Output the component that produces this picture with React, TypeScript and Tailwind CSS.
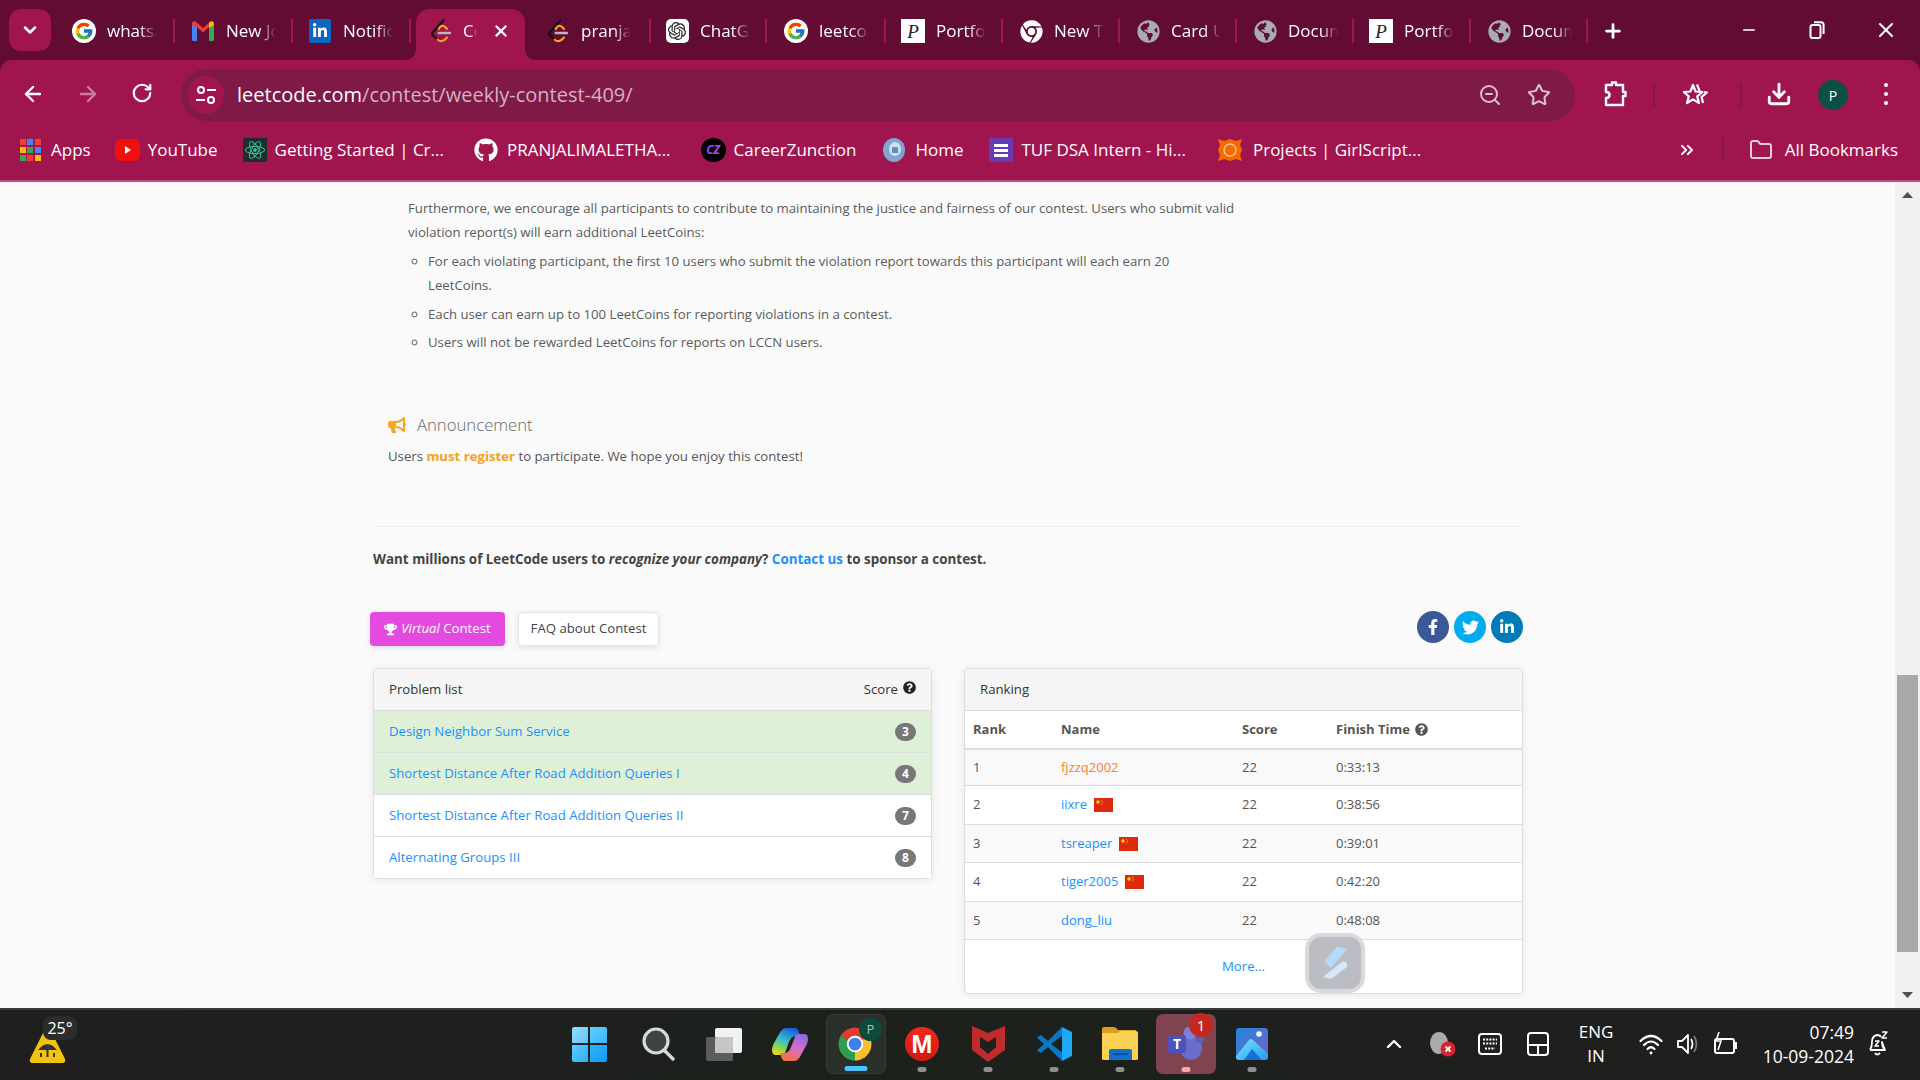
import React from 'react';
import {
  ArrowLeft, ArrowRight, RotateCw, ZoomOut, Star, Download, ChevronDown, Plus, X, Minus,
  ChevronsRight, Folder, ChevronUp,
} from 'lucide-react';
import { FcGoogle } from 'react-icons/fc';
import {
  FaLinkedinIn, FaChrome, FaGlobeAmericas, FaGithub, FaReact, FaTrophy, FaBullhorn,
  FaQuestionCircle, FaFacebookF, FaTwitter,
} from 'react-icons/fa';
import { SiOpenai } from 'react-icons/si';

const LeetLogo = () => (
  <svg width="20" height="24" viewBox="0 0 20 24" fill="none">
    <path d="M12.7 1.3 L1.6 13.5 Q0.6 14.8 1.6 16 L6.7 20.7" stroke="#111" strokeWidth="2.2" strokeLinecap="round" />
    <path d="M6.7 20.7 Q11 24.5 16 18.5" stroke="#f89f1b" strokeWidth="2.2" strokeLinecap="round" />
    <path d="M7.7 10 Q11 3.5 16 10" stroke="#f89f1b" strokeWidth="2.2" strokeLinecap="round" />
    <path d="M7.7 14 H19" stroke="#b8b8b8" strokeWidth="2.4" strokeLinecap="round" />
  </svg>
);

const GoogleIcon = () => (
  <span className="flex h-[24px] w-[24px] items-center justify-center rounded-full bg-white">
    <FcGoogle size={20} />
  </span>
);

const GmailIcon = () => (
  <svg width="24" height="22" viewBox="0 0 24 22">
    <path d="M1 4 L6 7 V21 H2.5 Q1 21 1 19.5 Z" fill="#4285f4" />
    <path d="M23 4 L18 7 V21 H21.5 Q23 21 23 19.5 Z" fill="#34a853" />
    <path d="M1 4 Q1 0.5 4.5 1.5 L12 8 L19.5 1.5 L18 7 L12 12.5 L6 7 L1 5.5 Z" fill="#ea4335" />
    <path d="M18 2.7 L19.5 1.5 Q23 0.5 23 4 V5 L18 8 Z" fill="#fbbc04" />
  </svg>
);

const LinkedinSquare = () => (
  <span className="flex h-[24px] w-[22px] items-center justify-center rounded-[2px] bg-[#0a66c2] text-white">
    <FaLinkedinIn size={16} />
  </span>
);

const ChatIcon = () => (
  <span className="flex h-[24px] w-[23px] items-center justify-center rounded-[5px] bg-white text-[#222]">
    <SiOpenai size={18} />
  </span>
);

const PortfolioIcon = () => (
  <span className="flex h-[24px] w-[24px] items-center justify-center bg-white font-['Liberation_Serif',serif] text-[19px] italic leading-none text-[#222]">
    P
  </span>
);

const ChromeWhite = () => <FaChrome size={23} color="#ffffff" />;
const Globe = () => <FaGlobeAmericas size={23} color="#a8adb3" />;

type Tab = { icon: React.ReactNode; label: string; cls: string };

const leftTabs: Tab[] = [
  { icon: <GoogleIcon />, label: 'whatsapp', cls: 'w-[116px] pl-[15px]' },
  { icon: <GmailIcon />, label: 'New Job', cls: 'w-[116px] pl-[16px]' },
  { icon: <LinkedinSquare />, label: 'Notifications', cls: 'w-[116px] pl-[15px]' },
];

const rightTabs: Tab[] = [
  { icon: <LeetLogo />, label: 'pranjali', cls: 'w-[119px] pl-[16px]' },
  { icon: <ChatIcon />, label: 'ChatGPT', cls: 'w-[114px] pl-[14px]' },
  { icon: <GoogleIcon />, label: 'leetcode', cls: 'w-[117px] pl-[17px]' },
  { icon: <PortfolioIcon />, label: 'Portfolio', cls: 'w-[115px] pl-[15px]' },
  { icon: <ChromeWhite />, label: 'New Tab', cls: 'w-[115px] pl-[16px]' },
  { icon: <Globe />, label: 'Card UI', cls: 'w-[115px] pl-[16px]' },
  { icon: <Globe />, label: 'Document', cls: 'w-[115px] pl-[16px]' },
  { icon: <PortfolioIcon />, label: 'Portfolio', cls: 'w-[115px] pl-[15px]' },
  { icon: <Globe />, label: 'Document', cls: 'w-[115px] pl-[16px]' },
];

const TabItem = ({ tab }: { tab: Tab }) => (
  <>
    <div className={`flex h-[42px] items-center ${tab.cls}`}>
      <span className="flex w-[24px] shrink-0 items-center justify-center">{tab.icon}</span>
      <span className="ml-[11px] w-[50px] overflow-hidden whitespace-nowrap text-[17px] text-white [mask-image:linear-gradient(to_right,black_65%,transparent)]">
        {tab.label}
      </span>
    </div>
    <span className="h-[24px] w-[2px] shrink-0 bg-[#a1154f]" />
  </>
);

const TabStrip = () => (
  <div className="flex h-[60px] items-start bg-[#630c33] pl-[9px]">
    <button className="mt-[9px] flex h-[42px] w-[42px] items-center justify-center rounded-[12px] bg-[#a1154f] text-white">
      <ChevronDown size={20} strokeWidth={3} />
    </button>
    <div className="ml-[6px] mt-[10px] flex items-center">
      {leftTabs.map((t) => (
        <TabItem key={t.label} tab={t} />
      ))}
    </div>
    <div className="relative ml-[5px] mt-[9px] flex h-[51px] w-[109px] items-center rounded-t-[14px] bg-[#a1154f] pb-[8px] pl-[15px]">
      <svg className="absolute bottom-0 left-[-12px]" width="12" height="12" viewBox="0 0 12 12">
        <path d="M12 0 V12 H0 Q12 12 12 0 Z" fill="#a1154f" />
      </svg>
      <svg className="absolute bottom-0 right-[-12px]" width="12" height="12" viewBox="0 0 12 12">
        <path d="M0 0 V12 H12 Q0 12 0 0 Z" fill="#a1154f" />
      </svg>
      <LeetLogo />
      <span className="ml-[12px] w-[14px] overflow-hidden text-[17px] text-white [mask-image:linear-gradient(to_right,black_50%,transparent)]">
        Contest
      </span>
      <X size={18} strokeWidth={3.2} className="ml-[15px] text-white" />
    </div>
    <div className="ml-[5px] mt-[10px] flex items-center">
      {rightTabs.map((t, i) => (
        <TabItem key={i} tab={t} />
      ))}
    </div>
    <Plus size={22} strokeWidth={3} className="ml-[14px] mt-[20px] text-white" />
    <div className="ml-auto flex h-[60px] text-white">
      <span className="flex w-[68px] items-center justify-center"><Minus size={18} strokeWidth={2} /></span>
      <span className="flex w-[68px] items-center justify-center">
        <svg width="16" height="18" viewBox="0 0 16 18" fill="none" stroke="white" strokeWidth="2">
          <rect x="1.5" y="4" width="10" height="13" rx="2" />
          <path d="M5 1.2 H12 Q14.6 1.2 14.6 4 V13" />
        </svg>
      </span>
      <span className="flex w-[69px] items-center justify-center"><X size={24} strokeWidth={2} /></span>
    </div>
  </div>
);

const SiteTune = () => (
  <svg width="22" height="22" viewBox="0 0 22 22" fill="none" stroke="white" strokeWidth="2">
    <circle cx="6" cy="6" r="3" />
    <path d="M12 6 H21" />
    <circle cx="16" cy="16" r="3" />
    <path d="M1 16 H10" />
  </svg>
);

const ExtensionIcon = () => (
  <svg width="24" height="26" viewBox="0 0 24 26" fill="none" stroke="white" strokeWidth="2.4" strokeLinejoin="round">
    <path d="M3 4 H9 V1.5 H13 V4 H20 V11 H22.5 V15 H20 V24 H3 V17 Q6.5 17 6.5 14 Q6.5 11 3 11 Z" />
  </svg>
);

const StarList = () => (
  <svg width="26" height="26" viewBox="0 0 26 26" fill="none" stroke="white" strokeWidth="2.2" strokeLinejoin="round">
    <path d="M10 3 L12.6 9.5 L19.5 10 L14.2 14.4 L16 21 L10 17.4 L4 21 L5.8 14.4 L0.8 10 L7.4 9.5 Z" />
    <path d="M14 2.5 L16.6 9 M20 21 L18.6 15 L24 10.5 L21 10" />
  </svg>
);

const Toolbar = () => (
  <div className="flex h-[64px] items-start rounded-t-[12px] bg-[#a1154f] pt-[9px] text-white">
    <span className="ml-[21px] mt-[13px] flex w-[24px] justify-center"><ArrowLeft size={24} strokeWidth={2.4} /></span>
    <span className="ml-[31px] mt-[13px] flex w-[24px] justify-center opacity-45"><ArrowRight size={24} strokeWidth={2.4} /></span>
    <span className="ml-[30px] mt-[13px] flex w-[24px] justify-center"><RotateCw size={22} strokeWidth={2.4} /></span>
    <div className="ml-[27px] flex h-[52px] w-[1394px] items-center rounded-full bg-[#7e1a45] pl-[7px]">
      <span className="flex h-[38px] w-[36px] items-center justify-center rounded-full bg-[#a1154f]"><SiteTune /></span>
      <span className="ml-[13px] text-[20px]">leetcode.com<span className="text-[#d5b0c0]">/contest/weekly-contest-409/</span></span>
      <ZoomOut size={24} strokeWidth={2} className="ml-auto text-[#dcc2ce]" />
      <Star size={24} strokeWidth={2} className="ml-[25px] mr-[24px] text-[#dcc2ce]" />
    </div>
    <span className="ml-[28px] mt-[12px]"><ExtensionIcon /></span>
    <span className="ml-[26px] mt-[14px] h-[24px] w-[2px] bg-[#7e1a45]" />
    <span className="ml-[28px] mt-[13px]"><StarList /></span>
    <span className="ml-[31px] mt-[14px] h-[24px] w-[2px] bg-[#7e1a45]" />
    <span className="ml-[24px] mt-[12px]"><Download size={26} strokeWidth={2.6} /></span>
    <span className="ml-[26px] mt-[11px] flex h-[30px] w-[30px] items-center justify-center rounded-full bg-[#0c5045] text-[14px]">P</span>
    <span className="ml-[36px] mt-[14px] flex flex-col gap-[5px]">
      <i className="h-[4px] w-[4px] rounded-full bg-white" />
      <i className="h-[4px] w-[4px] rounded-full bg-white" />
      <i className="h-[4px] w-[4px] rounded-full bg-white" />
    </span>
  </div>
);

const AppsIcon = () => (
  <div className="grid w-[20px] grid-cols-3 gap-[2px]">
    {['#ea4335', '#4285f4', '#ea4335', '#fbbc04', '#34a853', '#4285f4', '#34a853', '#ea4335', '#fbbc04'].map((c, i) => (
      <svg key={i} width="6" height="6"><rect width="6" height="6" fill={c} /></svg>
    ))}
  </div>
);

const YoutubeIcon = () => (
  <svg width="25" height="24" viewBox="0 0 25 24">
    <rect y="1" width="25" height="22" rx="6" fill="#f00f0f" />
    <path d="M10 8 L16 12 L10 16 Z" fill="white" />
  </svg>
);

const BookmarkItem = ({ icon, label, cls }: { icon: React.ReactNode; label: string; cls: string }) => (
  <div className={`flex items-center ${cls}`}>
    {icon}
    <span className="whitespace-nowrap text-[17px] text-white">{label}</span>
  </div>
);

const Bookmarks = () => (
  <div className="flex h-[58px] items-center border-b-[2px] border-[#bd4f7b] bg-[#a1154f] pb-[4px]">
    <BookmarkItem cls="ml-[20px] gap-[11px]" icon={<AppsIcon />} label="Apps" />
    <BookmarkItem cls="ml-[24px] gap-[8px]" icon={<YoutubeIcon />} label="YouTube" />
    <BookmarkItem
      cls="ml-[25px] gap-[8px]"
      icon={<span className="flex h-[24px] w-[24px] items-center justify-center bg-[#1e2e2e]"><FaReact size={20} color="#2fd6a0" /></span>}
      label="Getting Started | Cr..."
    />
    <BookmarkItem cls="ml-[30px] gap-[9px]" icon={<FaGithub size={24} color="white" />} label="PRANJALIMALETHA..." />
    <BookmarkItem
      cls="ml-[30px] gap-[8px]"
      icon={<span className="flex h-[24px] w-[25px] items-center justify-center rounded-full bg-black text-[12px] font-bold italic text-[#a04bf0]">CZ</span>}
      label="CareerZunction"
    />
    <BookmarkItem
      cls="ml-[27px] gap-[10px]"
      icon={
        <svg width="22" height="24" viewBox="0 0 22 24">
          <ellipse cx="11" cy="12" rx="11" ry="12" fill="#7ea6cf" />
          <ellipse cx="12" cy="11" rx="6" ry="7" fill="#cfe0ef" />
          <rect x="9" y="9" width="6" height="6" fill="#5f8fc0" />
        </svg>
      }
      label="Home"
    />
    <BookmarkItem
      cls="ml-[25px] gap-[9px]"
      icon={
        <span className="flex h-[24px] w-[24px] flex-col items-center justify-center gap-[2px] bg-[#673ab7]">
          <i className="h-[3px] w-[14px] bg-white" />
          <i className="h-[3px] w-[14px] bg-white" />
          <i className="h-[3px] w-[14px] bg-white" />
        </span>
      }
      label="TUF DSA Intern - Hi..."
    />
    <BookmarkItem
      cls="ml-[31px] gap-[10px]"
      icon={
        <svg width="26" height="24" viewBox="0 0 26 24">
          <path d="M1 1 L7 3 L13 1 L19 3 L25 1 L23 7 L25 12 L23 17 L25 23 L19 21 L13 23 L7 21 L1 23 L3 17 L1 12 L3 7 Z" fill="#f56a00" />
          <circle cx="13" cy="12" r="6" fill="none" stroke="#ffc78f" strokeWidth="1.4" />
        </svg>
      }
      label="Projects | GirlScript..."
    />
    <ChevronsRight size={20} strokeWidth={2.4} className="ml-auto text-white" />
    <span className="ml-[25px] h-[24px] w-[2px] bg-[#7e1a45]" />
    <Folder size={24} strokeWidth={2} className="ml-[25px] text-[#e3cbd6]" />
    <span className="ml-[12px] mr-[22px] whitespace-nowrap text-[17px] text-white">All Bookmarks</span>
  </div>
);

const problems = [
  { name: 'Design Neighbor Sum Service', score: 3, done: true },
  { name: 'Shortest Distance After Road Addition Queries I', score: 4, done: true },
  { name: 'Shortest Distance After Road Addition Queries II', score: 7, done: false },
  { name: 'Alternating Groups III', score: 8, done: false },
];

const ProblemList = () => (
  <div className="w-[559px] self-start rounded-[4px] border border-[#dddddd] bg-white shadow-[0_1px_8px_rgba(0,0,0,0.08)]">
    <div className="flex h-[41px] items-center justify-between rounded-t-[4px] bg-[#f5f5f5] pl-[15px] pr-[15px] text-[#333333]">
      <span>Problem list</span>
      <span className="flex items-center gap-[5px]">
        Score <FaQuestionCircle size={13} className="-mt-[3px] text-[#222222]" />
      </span>
    </div>
    {problems.map((p) => (
      <div
        key={p.name}
        className={`flex h-[42px] items-center justify-between border-t border-[#dddddd] pl-[15px] pr-[15px] text-[#1a90ff] ${p.done ? 'bg-[#dff0d8]' : 'bg-white'}`}
      >
        <span>{p.name}</span>
        <span className="flex h-[18px] w-[21px] items-center justify-center rounded-full bg-[#777777] text-[12px] font-bold leading-none text-white">
          {p.score}
        </span>
      </div>
    ))}
  </div>
);

const Flag = () => (
  <svg width="19" height="14" viewBox="0 0 19 14" className="ml-[7px]">
    <rect width="19" height="14" fill="#de2910" />
    <circle cx="4" cy="4" r="1.7" fill="#ffde00" />
    <circle cx="7.5" cy="2" r="0.6" fill="#ffde00" />
    <circle cx="8.5" cy="4" r="0.6" fill="#ffde00" />
    <circle cx="7.5" cy="6" r="0.6" fill="#ffde00" />
  </svg>
);

const ranks = [
  { rank: 1, name: 'fjzzq2002', time: '0:33:13', flag: false, h: 'h-[37px]' },
  { rank: 2, name: 'iixre', time: '0:38:56', flag: true, h: 'h-[39px]' },
  { rank: 3, name: 'tsreaper', time: '0:39:01', flag: true, h: 'h-[38px]' },
  { rank: 4, name: 'tiger2005', time: '0:42:20', flag: true, h: 'h-[39px]' },
  { rank: 5, name: 'dong_liu', time: '0:48:08', flag: false, h: 'h-[38px]' },
];

const Ranking = () => (
  <div className="ml-[32px] w-[559px] rounded-[4px] border border-[#dddddd] bg-white shadow-[0_1px_8px_rgba(0,0,0,0.08)]">
    <div className="flex h-[41px] items-center rounded-t-[4px] bg-[#f5f5f5] pl-[15px] text-[#333333]">Ranking</div>
    <table className="w-full table-fixed border-t border-[#dddddd] text-left text-[13px]">
      <thead>
        <tr className="h-[38px] border-b-[2px] border-[#dddddd] text-[#555555]">
          <th className="w-[88px] pl-[8px] font-bold">Rank</th>
          <th className="w-[181px] pl-[8px] font-bold">Name</th>
          <th className="w-[94px] pl-[8px] font-bold">Score</th>
          <th className="pl-[8px] font-bold">
            <span className="flex items-center gap-[5px]">Finish Time <FaQuestionCircle size={13} className="text-[#555555]" /></span>
          </th>
        </tr>
      </thead>
      <tbody className="text-[#555555]">
        {ranks.map((r) => (
          <tr key={r.rank} className={`${r.h} border-b border-[#dddddd] ${r.rank % 2 === 1 ? 'bg-[#f9f9f9]' : 'bg-white'}`}>
            <td className="pl-[8px]">{r.rank}</td>
            <td className="pl-[8px]">
              <span className="flex items-center">
                <span className={r.rank === 1 ? 'text-[#ff7f1f]' : 'text-[#1a90ff]'}>{r.name}</span>
                {r.flag && <Flag />}
              </span>
            </td>
            <td className="pl-[8px]">22</td>
            <td className="pl-[8px]">{r.time}</td>
          </tr>
        ))}
      </tbody>
    </table>
    <div className="relative flex h-[53px] items-center justify-center text-[#1a90ff]">
      More...
      <div className="absolute left-[340px] top-[-7px] flex h-[60px] w-[60px] items-center justify-center rounded-[16px] bg-[#d9dadd]">
        <div className="flex h-[52px] w-[52px] items-center justify-center rounded-[12px] bg-[#bcbdc2]">
          <svg width="25" height="34" viewBox="0 0 25 34">
            <path d="M14.3 0.7 L24.3 2.7 L8 22 L1 15.3 Z" fill="#b6daf9" />
            <path d="M20 15 Q25 16 24 21 L8 33 L0 31 Z" fill="#d3e8fb" />
          </svg>
        </div>
      </div>
    </div>
  </div>
);

const Content = () => (
  <div className="h-[826px] flex-1 overflow-hidden bg-[#fafafa] pl-[373px] pr-[372px] pt-[14px] font-['Open_Sans',sans-serif] text-[13.2px] text-[#555555]">
    <div className="ml-[35px] w-[840px] leading-[24px] text-[#5a5a5a]">
      <p>
        Furthermore, we encourage all participants to contribute to maintaining the justice and fairness of our contest. Users who submit valid
        <br />
        violation report(s) will earn additional LeetCoins:
      </p>
      <ul className="mt-[6px] list-[circle] pl-[20px]">
        <li className="w-[750px] leading-[23.5px]">For each violating participant, the first 10 users who submit the violation report towards this participant will each earn 20 LeetCoins.</li>
        <li className="mt-[4.5px]">Each user can earn up to 100 LeetCoins for reporting violations in a contest.</li>
        <li className="mt-[4.5px]">Users will not be rewarded LeetCoins for reports on LCCN users.</li>
      </ul>
    </div>
    <div className="ml-[15px] mt-[59px] flex items-center">
      <FaBullhorn size={18} className="text-[#f5a623]" />
      <span className="ml-[11px] text-[16.7px] font-light leading-[24px] text-[#666666]">Announcement</span>
    </div>
    <p className="ml-[15px] mt-[8px] leading-[22px]">
      Users <span className="font-bold text-[#f5a11e]">must register</span> to participate. We hope you enjoy this contest!
    </p>
    <div className="mt-[59px] h-px bg-[#eeeeee]" />
    <p className="mt-[21px] text-[13.4px] font-bold leading-[22px] text-[#444444]">
      Want millions of LeetCode users to <em>recognize your company</em>? <span className="text-[#1a90ff]">Contact us</span> to sponsor a contest.
    </p>
    <div className="mt-[42px] flex items-start">
      <button className="-ml-[3px] flex h-[34px] w-[135px] items-center justify-center gap-[4px] rounded-[4px] bg-[#e44ae0] text-white shadow-[0_2px_6px_rgba(0,0,0,0.1)]">
        <FaTrophy size={13} />
        <span><em>Virtual</em> Contest</span>
      </button>
      <button className="ml-[13px] flex h-[34px] w-[141px] items-center justify-center rounded-[4px] border border-[#e4e4e4] bg-white text-[#444444] shadow-[0_2px_6px_rgba(0,0,0,0.1)]">
        FAQ about Contest
      </button>
      <div className="ml-auto -mt-[1px] flex gap-[5px] text-white">
        <span className="flex h-[32px] w-[32px] items-center justify-center rounded-full bg-[#3b5998]"><FaFacebookF size={16} /></span>
        <span className="flex h-[32px] w-[32px] items-center justify-center rounded-full bg-[#00aced]"><FaTwitter size={17} /></span>
        <span className="flex h-[32px] w-[32px] items-center justify-center rounded-full bg-[#007bb6]"><FaLinkedinIn size={16} /></span>
      </div>
    </div>
    <div className="mt-[22px] flex items-start">
      <ProblemList />
      <Ranking />
    </div>
  </div>
);

const Scrollbar = () => (
  <div className="flex h-[826px] w-[25px] flex-col items-center bg-[#f1f1f1]">
    <svg className="mt-[10px]" width="11" height="6" viewBox="0 0 11 6"><path d="M5.5 0 L11 6 H0 Z" fill="#505050" /></svg>
    <div className="mt-[477px] h-[277px] w-[21px] bg-[#a8a8a8]" />
    <svg className="mt-[40px]" width="11" height="6" viewBox="0 0 11 6"><path d="M0 0 H11 L5.5 6 Z" fill="#505050" /></svg>
  </div>
);

const Dot = ({ cls }: { cls: string }) => <span className={`absolute bottom-[2px] left-1/2 -translate-x-1/2 rounded-full ${cls}`} />;

const TaskCell = ({ children, dot, active }: { children: React.ReactNode; dot?: string; active?: string }) => (
  <div className={`relative mx-[3px] flex h-[60px] w-[60px] items-center justify-center rounded-[7px] ${active ?? ''}`}>
    {children}
    {dot && <Dot cls={dot} />}
  </div>
);

const grayDot = 'h-[5px] w-[9px] bg-[#8f8f8f]';

const ChromeIcon = () => (
  <svg width="36" height="36" viewBox="0 0 48 48">
    <path d="M24 24 L43 13 A22 22 0 0 0 5 13 Z" fill="#e33b2e" />
    <path d="M24 24 L5 13 A22 22 0 0 0 24 46 Z" fill="#2f9e4f" />
    <path d="M24 24 L24 46 A22 22 0 0 0 43 13 Z" fill="#fbc02d" />
    <circle cx="24" cy="24" r="11" fill="white" />
    <circle cx="24" cy="24" r="8.5" fill="#3d7fe8" />
  </svg>
);

const Taskbar = () => (
  <div className="flex h-[72px] items-start border-t-[2px] border-[#3a3a3a] bg-gradient-to-r from-[#1f1f1f] via-[#1c211b] to-[#1f1f1f] pt-[4px] text-white">
    <div className="relative ml-[29px] w-[527px] pt-[12px]">
      <svg width="37" height="36" viewBox="0 0 37 36" className="mt-[2px]">
        <path d="M15 3 Q18.5 -1 22 3 L36 31 Q37 35 33 35 H4 Q0 35 1 31 Z" fill="#f2c40f" />
        <path d="M9 22 Q18.5 10 28 22 Z" fill="#333" />
        <path d="M18.5 22 V29 M12 25 V29 M25 25 V29" stroke="#333" strokeWidth="2" />
      </svg>
      <span className="absolute left-[14px] top-[2px] flex h-[24px] w-[34px] items-center justify-center rounded-[8px] bg-[#2c2c2c] text-[16px]">25°</span>
    </div>
    <div className="flex">
      <TaskCell>
        <div className="grid h-[35px] w-[35px] grid-cols-2 gap-[1.5px]">
          <span className="rounded-tl-[2px] bg-gradient-to-br from-[#96dcff] to-[#5cc4fb]" />
          <span className="rounded-tr-[2px] bg-gradient-to-br from-[#62ceff] to-[#36b6fb]" />
          <span className="rounded-bl-[2px] bg-gradient-to-br from-[#5ccbff] to-[#2eaef8]" />
          <span className="rounded-br-[2px] bg-gradient-to-br from-[#2db4fb] to-[#1498f5]" />
        </div>
      </TaskCell>
      <span className="w-[3px]" />
      <TaskCell>
        <svg width="33" height="34" viewBox="0 0 33 34" fill="#3c4440" stroke="#d8d8d8" strokeWidth="3.2">
          <circle cx="14" cy="14" r="12" />
          <path d="M23 24 L31 32" strokeLinecap="round" fill="none" strokeWidth="3.4" />
        </svg>
      </TaskCell>
      <TaskCell>
        <svg width="36" height="33" viewBox="0 0 36 33">
          <rect x="9" y="0" width="27" height="25" rx="2" fill="#f2f2f2" />
          <rect x="0" y="9" width="27" height="24" rx="2" fill="#5c5c5c" />
          <path d="M9 11 Q9 9 11 9 H25 Q27 9 27 11 V25 H9 Z" fill="#c6c6c6" />
        </svg>
      </TaskCell>
      <TaskCell>
        <svg width="36" height="33" viewBox="0 0 36 33">
          <defs>
            <linearGradient id="copA" x1="0.6" y1="0" x2="0.2" y2="1">
              <stop offset="0" stopColor="#1a5fe0" />
              <stop offset="0.45" stopColor="#38c0c8" />
              <stop offset="0.8" stopColor="#9fd83a" />
              <stop offset="1" stopColor="#f5d02a" />
            </linearGradient>
            <linearGradient id="copB" x1="0.7" y1="0" x2="0.3" y2="1">
              <stop offset="0" stopColor="#8f6ae8" />
              <stop offset="0.5" stopColor="#d86cc8" />
              <stop offset="1" stopColor="#f5713c" />
            </linearGradient>
          </defs>
          <path d="M14 0 H23 Q26 0 27 5 L28 8 H24 Q19 8 17 14 L13 25 Q12 27 9 27 H4 Q0 27 0 22 Q0 20 1 17 L7 6 Q10 0 14 0 Z" fill="url(#copA)" />
          <path d="M27 6 H32 Q36 6 36 11 Q36 13 35 16 L29 27 Q26 33 22 33 H13 Q10 33 9 28 L8 25 H12 Q17 25 19 19 L23 9 Q24 6 27 6 Z" fill="url(#copB)" />
        </svg>
      </TaskCell>
      <TaskCell active="border border-[#363b36] bg-[#2a2f2a]" dot="h-[5px] w-[23px] bg-[#4cc2ff]">
        <div className="relative -ml-[2px]">
          <ChromeIcon />
          <span className="absolute right-[-9px] top-[-8px] flex h-[23px] w-[23px] items-center justify-center rounded-full bg-[#0c4a3e] text-[13px] text-[#a9c4bc]">P</span>
        </div>
      </TaskCell>
      <TaskCell dot={grayDot}>
        <span className="flex h-[34px] w-[34px] items-center justify-center rounded-full bg-gradient-to-b from-[#f2281c] to-[#cf1a14] font-['Liberation_Sans',sans-serif] text-[25px] font-bold leading-none text-white">M</span>
      </TaskCell>
      <TaskCell dot={grayDot}>
        <svg width="33" height="36" viewBox="0 0 33 36">
          <path d="M0 0 L16 7 L33 0 V24 L16 36 L0 24 Z M8 11 V21 L16 28 L24 21 V11 L16 16 Z" fill="#c02c2c" fillRule="evenodd" />
        </svg>
      </TaskCell>
      <TaskCell dot={grayDot}>
        <svg width="36" height="36" viewBox="0 0 36 36">
          <path d="M26 1 L12 15 L5 9 L1 11.5 L8 18 L1 24.5 L5 27 L12 21 L26 35 L27 27 L15 18 L27 9 Z" fill="#0a78c8" />
          <path d="M26 1 L36 6 V30 L26 35 Z" fill="#1fa8f5" />
        </svg>
      </TaskCell>
      <TaskCell dot={grayDot}>
        <svg width="36" height="34" viewBox="0 0 36 34">
          <path d="M0 2 Q0 0 2 0 H12 Q14 0 16 3 H34 V12 H0 Z" fill="#d99f1c" />
          <path d="M0 6 H16 L18 4 H34 Q36 4 36 6 V32 Q36 33 34 33 H2 Q0 33 0 32 Z" fill="#fbd154" />
          <path d="M7 33 V24 Q7 22 9 22 H28 Q30 22 30 24 V33 Z" fill="#1170c9" />
          <rect x="11" y="26" width="15" height="2" fill="#0a4f96" />
        </svg>
      </TaskCell>
      <TaskCell active="bg-[#7f4450]" dot="h-[5px] w-[9px] bg-[#ffa6b0]">
        <div className="relative h-[36px] w-[36px]">
          <svg width="36" height="36" viewBox="0 0 36 36">
            <ellipse cx="23" cy="22" rx="11" ry="12" fill="#6b6ec9" />
            <circle cx="22" cy="7" r="6.5" fill="#7b83d6" />
            <circle cx="32" cy="13" r="4" fill="#5a5fb8" />
            <rect x="0" y="9" width="18" height="18" rx="2" fill="#4b53bc" />
          </svg>
          <span className="absolute left-[5px] top-[11px] text-[14px] font-bold leading-none">T</span>
          <span className="absolute right-[-9px] top-[-13px] flex h-[24px] w-[24px] items-center justify-center rounded-full bg-[#c4271f] text-[15px]">1</span>
        </div>
      </TaskCell>
      <TaskCell dot={grayDot}>
        <svg width="32" height="32" viewBox="0 0 32 32">
          <defs>
            <linearGradient id="ph" x1="0" y1="0" x2="1" y2="1">
              <stop offset="0" stopColor="#2088e0" />
              <stop offset="1" stopColor="#7a5fc0" />
            </linearGradient>
            <linearGradient id="mt" x1="0" y1="0" x2="1" y2="1">
              <stop offset="0" stopColor="#7fe4ff" />
              <stop offset="1" stopColor="#1f9cf0" />
            </linearGradient>
          </defs>
          <rect width="32" height="32" rx="3" fill="url(#ph)" />
          <circle cx="23" cy="6" r="2.8" fill="#eef6ff" />
          <path d="M0 28 L13 12 Q15 10 17 12 L32 26 V29 Q32 32 29 32 H3 Q0 32 0 29 Z" fill="url(#mt)" />
          <path d="M8 32 L16 21 L26 32 Z" fill="#1570d8" />
        </svg>
      </TaskCell>
    </div>
    <div className="ml-[85px] flex h-[60px] items-center">
      <span className="flex w-[48px] justify-center"><ChevronUp size={24} strokeWidth={2.4} /></span>
      <span className="relative flex w-[48px] justify-center">
        <svg width="26" height="26" viewBox="0 0 26 26">
          <ellipse cx="10" cy="12" rx="9" ry="11" fill="#aaaaaa" />
          <circle cx="19" cy="18" r="7.5" fill="#d9232e" />
          <path d="M16.5 15.5 L21.5 20.5 M21.5 15.5 L16.5 20.5" stroke="white" strokeWidth="1.8" />
        </svg>
      </span>
      <span className="flex w-[48px] justify-center">
        <svg width="24" height="24" viewBox="0 0 24 24" fill="none" stroke="white" strokeWidth="2">
          <rect x="1" y="2" width="22" height="20" rx="3" />
          <path d="M5 7.5 H19 M5 11.5 H19 M7 16.5 H17" strokeDasharray="2 1.2" />
        </svg>
      </span>
      <span className="flex w-[48px] justify-center">
        <svg width="22" height="26" viewBox="0 0 22 26" fill="none" stroke="white" strokeWidth="2">
          <rect x="1" y="2" width="20" height="22" rx="3" />
          <path d="M1 14 H21 M11 14 V24" />
        </svg>
      </span>
      <span className="flex w-[68px] flex-col items-center text-[17px] leading-[24px]">
        <span>ENG</span>
        <span>IN</span>
      </span>
      <span className="ml-[3px] flex w-[36px] justify-center">
        <svg width="24" height="24" viewBox="0 0 24 24" fill="none" stroke="white" strokeWidth="2.2" strokeLinecap="round">
          <path d="M1.5 9 Q12 -1 22.5 9" />
          <path d="M5 13 Q12 6 19 13" />
          <path d="M8.5 17 Q12 13.5 15.5 17" />
          <circle cx="12" cy="21" r="1.4" fill="white" stroke="none" />
        </svg>
      </span>
      <span className="ml-[1px] flex w-[36px] justify-center">
        <svg width="24" height="24" viewBox="0 0 24 24" fill="none" stroke="white" strokeWidth="1.8">
          <path d="M2 9 H6 L12 3 V21 L6 15 H2 Z" strokeLinejoin="round" />
          <path d="M15 7 Q18 12 15 17" />
          <path d="M18 4 Q23 12 18 20" stroke="#777777" />
        </svg>
      </span>
      <span className="flex w-[36px] justify-center">
        <svg width="25" height="24" viewBox="0 0 25 24" fill="none" stroke="white" strokeWidth="2">
          <rect x="3" y="7" width="19" height="14" rx="2" />
          <path d="M22 11 H24 V16 H22" />
          <path d="M7 0 L4 9 H9 L6 18" strokeWidth="1.6" />
        </svg>
      </span>
      <span className="flex w-[112px] flex-col items-end text-[17.5px] leading-[24px]">
        <span>07:49</span>
        <span>10-09-2024</span>
      </span>
      <span className="flex w-[48px] justify-center">
        <svg width="22" height="26" viewBox="0 0 22 26" fill="none" stroke="white" strokeWidth="1.8" strokeLinejoin="round">
          <path d="M3 19 Q5 16 5 11 Q5 5 10 4 Q13 4 14 6 M15 11 Q15 16 18 19 Z M3 19 H18 M8 22 Q10 25 13 22" />
          <path d="M8 10 H12 L8 15 H12 M15 1 H20 L15 7 H20" strokeWidth="1.5" />
        </svg>
      </span>
    </div>
  </div>
);

const App = () => {
  return (
    <div className="flex h-[1080px] w-[1920px] flex-col overflow-hidden bg-[#630c33] font-['Open_Sans',sans-serif]">
      <TabStrip />
      <Toolbar />
      <Bookmarks />
      <div className="flex">
        <Content />
        <Scrollbar />
      </div>
      <Taskbar />
    </div>
  );
};

export default App;
